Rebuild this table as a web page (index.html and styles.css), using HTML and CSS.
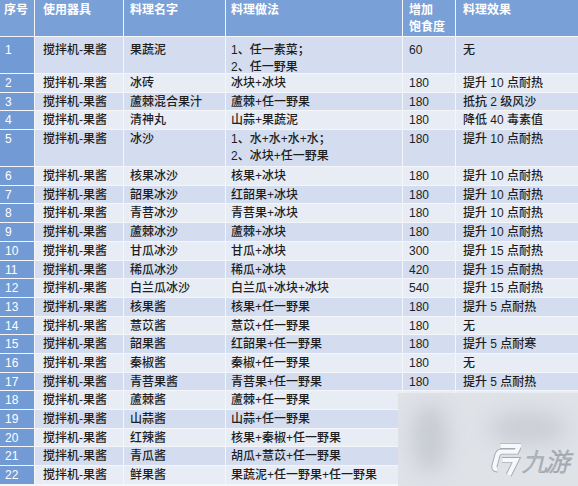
FILE: index.html
```html
<!DOCTYPE html>
<html lang="zh">
<head>
<meta charset="utf-8">
<link rel="stylesheet" href="styles.css">
</head>
<body>
<div class="sheet">
  <div class="row head">
    <div class="c c1">序号</div><div class="c c2">使用器具</div><div class="c c3">料理名字</div><div class="c c4">料理做法</div><div class="c c5">增加<br>饱食度</div><div class="c c6">料理效果</div>
  </div>
  <div class="row tall odd first">
    <div class="c c1">1</div><div class="c c2">搅拌机-果酱</div><div class="c c3">果蔬泥</div><div class="c c4">1、任一素菜；<br>2、任一野果</div><div class="c c5">60</div><div class="c c6">无</div>
  </div>
  <div class="row even">
    <div class="c c1">2</div><div class="c c2">搅拌机-果酱</div><div class="c c3">冰砖</div><div class="c c4">冰块+冰块</div><div class="c c5">180</div><div class="c c6">提升 10 点耐热</div>
  </div>
  <div class="row odd">
    <div class="c c1">3</div><div class="c c2">搅拌机-果酱</div><div class="c c3">蘆棘混合果汁</div><div class="c c4">蘆棘+任一野果</div><div class="c c5">180</div><div class="c c6">抵抗 2 级风沙</div>
  </div>
  <div class="row even">
    <div class="c c1">4</div><div class="c c2">搅拌机-果酱</div><div class="c c3">清神丸</div><div class="c c4">山蒜+果蔬泥</div><div class="c c5">180</div><div class="c c6">降低 40 毒素值</div>
  </div>
  <div class="row tall odd">
    <div class="c c1">5</div><div class="c c2">搅拌机-果酱</div><div class="c c3">冰沙</div><div class="c c4">1、水+水+水+水；<br>2、冰块+任一野果</div><div class="c c5">180</div><div class="c c6">提升 10 点耐热</div>
  </div>
  <div class="row even">
    <div class="c c1">6</div><div class="c c2">搅拌机-果酱</div><div class="c c3">核果冰沙</div><div class="c c4">核果+冰块</div><div class="c c5">180</div><div class="c c6">提升 10 点耐热</div>
  </div>
  <div class="row odd">
    <div class="c c1">7</div><div class="c c2">搅拌机-果酱</div><div class="c c3">韶果冰沙</div><div class="c c4">红韶果+冰块</div><div class="c c5">180</div><div class="c c6">提升 10 点耐热</div>
  </div>
  <div class="row even">
    <div class="c c1">8</div><div class="c c2">搅拌机-果酱</div><div class="c c3">青菩冰沙</div><div class="c c4">青菩果+冰块</div><div class="c c5">180</div><div class="c c6">提升 10 点耐热</div>
  </div>
  <div class="row odd">
    <div class="c c1">9</div><div class="c c2">搅拌机-果酱</div><div class="c c3">蘆棘冰沙</div><div class="c c4">蘆棘+冰块</div><div class="c c5">180</div><div class="c c6">提升 10 点耐热</div>
  </div>
  <div class="row even">
    <div class="c c1">10</div><div class="c c2">搅拌机-果酱</div><div class="c c3">甘瓜冰沙</div><div class="c c4">甘瓜+冰块</div><div class="c c5">300</div><div class="c c6">提升 15 点耐热</div>
  </div>
  <div class="row odd">
    <div class="c c1">11</div><div class="c c2">搅拌机-果酱</div><div class="c c3">稀瓜冰沙</div><div class="c c4">稀瓜+冰块</div><div class="c c5">420</div><div class="c c6">提升 15 点耐热</div>
  </div>
  <div class="row even">
    <div class="c c1">12</div><div class="c c2">搅拌机-果酱</div><div class="c c3">白兰瓜冰沙</div><div class="c c4">白兰瓜+冰块+冰块</div><div class="c c5">540</div><div class="c c6">提升 15 点耐热</div>
  </div>
  <div class="row odd">
    <div class="c c1">13</div><div class="c c2">搅拌机-果酱</div><div class="c c3">核果酱</div><div class="c c4">核果+任一野果</div><div class="c c5">180</div><div class="c c6">提升 5 点耐热</div>
  </div>
  <div class="row even">
    <div class="c c1">14</div><div class="c c2">搅拌机-果酱</div><div class="c c3">薏苡酱</div><div class="c c4">薏苡+任一野果</div><div class="c c5">180</div><div class="c c6">无</div>
  </div>
  <div class="row odd">
    <div class="c c1">15</div><div class="c c2">搅拌机-果酱</div><div class="c c3">韶果酱</div><div class="c c4">红韶果+任一野果</div><div class="c c5">180</div><div class="c c6">提升 5 点耐寒</div>
  </div>
  <div class="row even">
    <div class="c c1">16</div><div class="c c2">搅拌机-果酱</div><div class="c c3">秦椒酱</div><div class="c c4">秦椒+任一野果</div><div class="c c5">180</div><div class="c c6">无</div>
  </div>
  <div class="row odd">
    <div class="c c1">17</div><div class="c c2">搅拌机-果酱</div><div class="c c3">青菩果酱</div><div class="c c4">青菩果+任一野果</div><div class="c c5">180</div><div class="c c6">提升 5 点耐热</div>
  </div>
  <div class="row even">
    <div class="c c1">18</div><div class="c c2">搅拌机-果酱</div><div class="c c3">蘆棘酱</div><div class="c c4">蘆棘+任一野果</div><div class="c c5"></div><div class="c c6"></div>
  </div>
  <div class="row odd">
    <div class="c c1">19</div><div class="c c2">搅拌机-果酱</div><div class="c c3">山蒜酱</div><div class="c c4">山蒜+任一野果</div><div class="c c5"></div><div class="c c6"></div>
  </div>
  <div class="row even">
    <div class="c c1">20</div><div class="c c2">搅拌机-果酱</div><div class="c c3">红辣酱</div><div class="c c4">核果+秦椒+任一野果</div><div class="c c5"></div><div class="c c6"></div>
  </div>
  <div class="row odd">
    <div class="c c1">21</div><div class="c c2">搅拌机-果酱</div><div class="c c3">青瓜酱</div><div class="c c4">胡瓜+薏苡+任一野果</div><div class="c c5"></div><div class="c c6"></div>
  </div>
  <div class="row even">
    <div class="c c1">22</div><div class="c c2">搅拌机-果酱</div><div class="c c3">鲜果酱</div><div class="c c4">果蔬泥+任一野果+任一野果</div><div class="c c5"></div><div class="c c6"></div>
  </div>

  <div class="mark">
    <div class="blob b1"></div>
    <div class="blob b2"></div>
    <div class="logo">
      <svg class="logo-icon" width="34" height="34" viewBox="0 0 36 36">
        <g fill="none" stroke-linejoin="miter" stroke-linecap="butt">
          <path d="M14 3 H34 L31 9 H16 Q12 9 11 13 L8 24 Q7 28 11 28" stroke="#a4a9b1" stroke-width="6.5"/>
          <path d="M14 3 H34 L31 9 H16 Q12 9 11 13 L8 24 Q7 28 11 28" stroke="#f7f8fa" stroke-width="4.5"/>
          <path d="M16 18 H31 L23 34" stroke="#a4a9b1" stroke-width="6.5"/>
          <path d="M16 18 H31 L23 34" stroke="#f7f8fa" stroke-width="4.5"/>
        </g>
      </svg>
      <span class="logo-text">九游</span>
    </div>
  </div>
</div>
</body>
</html>
```

FILE: styles.css
```css
* { box-sizing: border-box; }
html, body { margin: 0; padding: 0; background: #f4f6fa; }
.sheet {
  position: relative;
  width: 578px;
  height: 486px;
  overflow: hidden;
  display: flex;
  flex-direction: column;
  font-family: "Liberation Sans", "Noto Sans CJK SC", sans-serif;
  font-size: 12px;
  line-height: 17px;
  color: #1e1e1e;
  font-weight: 500;
}
.row {
  display: grid;
  grid-template-columns: 35px 89px 102px 177px 53px 122px;
  height: 18.7px;
  flex: none;
}
.row.tall, .row.head { height: 37px; }
.c {
  border-right: 1px solid #f4f6fa;
  border-bottom: 1px solid #f4f6fa;
  padding: 1px 4px 0 6px;
  white-space: nowrap;
  overflow: hidden;
}
.c6 { border-right: none; padding-left: 7px; }
.c1 { padding-left: 5px; }
.c2 { padding-left: 8px; }
.c4 { padding-left: 5px; }
.head .c {
  background: #7aa0d8;
  color: #fff;
  font-weight: 700;
  padding-top: 2px;
}
.head .c1 { padding-left: 4px; }
.odd .c { background: #d3ddef; }
.even .c { background: #e7ecf5; }
.odd .c1, .even .c1 { background: #729ad4; color: #fff; }
.first .c { padding-top: 5px; }

.mark {
  position: absolute;
  left: 398px;
  top: 393px;
  width: 180px;
  height: 93px;
  background: #dfe2e7;
  overflow: hidden;
}
.blob {
  position: absolute;
  border-radius: 50%;
  filter: blur(10px);
}
.b1 { left: 14px; top: 10px; width: 36px; height: 70px; background: #c8ccd2; }
.b2 { left: 90px; top: 18px; width: 80px; height: 34px; background: #cbcfd5; }
.logo {
  position: absolute;
  left: 89px;
  top: 50px;
  display: flex;
  align-items: center;
  gap: 1px;
}
.logo-icon { display: block; }
.logo-text {
  font-family: "Noto Sans CJK SC", sans-serif;
  font-size: 25px;
  line-height: 34px;
  font-style: italic;
  font-weight: 300;
  color: #f7f8fa;
  -webkit-text-stroke: 1px #a4a9b1;
  letter-spacing: -2px;
}
```
